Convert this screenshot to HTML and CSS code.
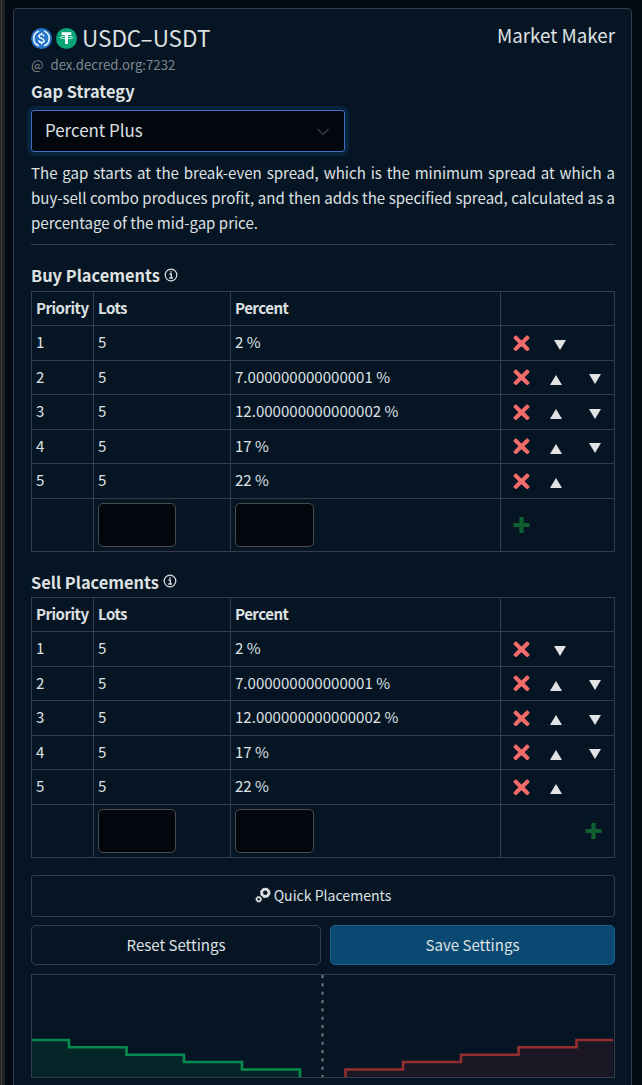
FILE: index.html
```html
<!DOCTYPE html>
<html lang="en">
<head>
<meta charset="utf-8">
<title>Market Maker Settings</title>
<link rel="stylesheet" href="styles.css">
</head>
<body>
<svg class="defs" width="0" height="0">
  <symbol id="cross" viewBox="0 0 17 17"><path d="M2.2 .6H3.4L8.5 5.4L13.6 .6H14.8L16.4 2.2V3.4L11.6 8.3L16.4 13.2V14.4L14.8 16H13.6L8.5 11.2L3.4 16H2.2L.6 14.4V13.2L5.4 8.3L.6 3.4V2.2Z" fill="#f16b6b"/></symbol>
  <symbol id="up" viewBox="0 0 12 10"><path d="M6 0L12 10H0Z" fill="#e1e2e3"/></symbol>
  <symbol id="down" viewBox="0 0 12 10"><path d="M0 0H12L6 10Z" fill="#e1e2e3"/></symbol>
  <symbol id="plus" viewBox="0 0 17 17"><path d="M8.5 0V16M.5 8H16.5" stroke="#0e602f" stroke-width="4.2"/></symbol>
  <symbol id="info" viewBox="0 0 14 14"><circle cx="7" cy="7" r="5.8" fill="none" stroke="#dfe1e2" stroke-width="1.2"/><path d="M5.5 6H7.3V10M5.3 10H9M6.3 3.8H7.8" fill="none" stroke="#dfe1e2" stroke-width="1.3"/></symbol>
</svg>
<main class="card">
  <header class="head">
    <div class="pair">
      <svg class="coin" viewBox="0 0 21 21"><circle cx="10.5" cy="10.5" r="10.5" fill="#2775ca"/><path d="M8 3.2A7.7 7.7 0 0 0 8 17.8M13 3.2A7.7 7.7 0 0 1 13 17.8" fill="none" stroke="#fff" stroke-width="1.4"/><path d="M13 8.3C12.8 6.9 11.8 6.4 10.5 6.4C9 6.4 8 7.1 8 8.3C8 11 13.1 9.9 13.1 12.5C13.1 13.8 12 14.5 10.5 14.5C9 14.5 7.9 13.8 7.8 12.4M10.5 4.8V6.4M10.5 14.5V16.2" fill="none" stroke="#fff" stroke-width="1.4"/></svg>
      <svg class="coin" viewBox="0 0 21 21"><circle cx="10.5" cy="10.5" r="10.5" fill="#08a578"/><path d="M5.7 4.3H15.3V7H11.9V16H9.1V7H5.7Z" fill="#fff"/><ellipse cx="10.5" cy="9.5" rx="6.2" ry="1.3" fill="none" stroke="#fff" stroke-width=".8"/></svg>
      <h1 class="title">USDC–USDT</h1>
    </div>
    <div class="mode">Market Maker</div>
  </header>
  <div class="host"><span>@</span><span>dex.decred.org:7232</span></div>
  <h2 class="label">Gap Strategy</h2>
  <div class="select"><span>Percent Plus</span><svg class="chevron" viewBox="0 0 14 8"><path d="M1.5 1L7 6.5L12.5 1" fill="none" stroke="#393c46" stroke-width="1.5"/></svg></div>
  <p class="about">The gap starts at the break-even spread, which is the minimum spread at which a buy-sell combo produces profit, and then adds the specified spread, calculated as a percentage of the mid-gap price.</p>

  <section class="placements">
    <h2 class="section-title">Buy Placements <svg class="info"><use href="#info"/></svg></h2>
    <table class="grid">
      <colgroup><col class="c-priority"><col class="c-lots"><col class="c-percent"><col class="c-actions"></colgroup>
      <tr><th>Priority</th><th>Lots</th><th>Percent</th><th></th></tr>
      <tr class="tall"><td>1</td><td>5</td><td>2 %</td><td><div class="actions"><svg class="cross"><use href="#cross"/></svg><svg class="tri only-down"><use href="#down"/></svg></div></td></tr>
      <tr><td>2</td><td>5</td><td>7.000000000000001 %</td><td><div class="actions"><svg class="cross"><use href="#cross"/></svg><svg class="tri up"><use href="#up"/></svg><svg class="tri down"><use href="#down"/></svg></div></td></tr>
      <tr class="tall"><td>3</td><td>5</td><td>12.000000000000002 %</td><td><div class="actions"><svg class="cross"><use href="#cross"/></svg><svg class="tri up"><use href="#up"/></svg><svg class="tri down"><use href="#down"/></svg></div></td></tr>
      <tr><td>4</td><td>5</td><td>17 %</td><td><div class="actions"><svg class="cross"><use href="#cross"/></svg><svg class="tri up"><use href="#up"/></svg><svg class="tri down"><use href="#down"/></svg></div></td></tr>
      <tr class="tall"><td>5</td><td>5</td><td>22 %</td><td><div class="actions"><svg class="cross"><use href="#cross"/></svg><svg class="tri up"><use href="#up"/></svg></div></td></tr>
      <tr class="entry"><td></td><td><input class="field" aria-label="Lots"></td><td><input class="field wide" aria-label="Percent"></td><td><div class="actions"><svg class="cross"><use href="#plus"/></svg></div></td></tr>
    </table>
  </section>

  <section class="placements sell">
    <h2 class="section-title">Sell Placements <svg class="info"><use href="#info"/></svg></h2>
    <table class="grid">
      <colgroup><col class="c-priority"><col class="c-lots"><col class="c-percent"><col class="c-actions"></colgroup>
      <tr><th>Priority</th><th>Lots</th><th>Percent</th><th></th></tr>
      <tr class="tall"><td>1</td><td>5</td><td>2 %</td><td><div class="actions"><svg class="cross"><use href="#cross"/></svg><svg class="tri only-down"><use href="#down"/></svg></div></td></tr>
      <tr><td>2</td><td>5</td><td>7.000000000000001 %</td><td><div class="actions"><svg class="cross"><use href="#cross"/></svg><svg class="tri up"><use href="#up"/></svg><svg class="tri down"><use href="#down"/></svg></div></td></tr>
      <tr class="tall"><td>3</td><td>5</td><td>12.000000000000002 %</td><td><div class="actions"><svg class="cross"><use href="#cross"/></svg><svg class="tri up"><use href="#up"/></svg><svg class="tri down"><use href="#down"/></svg></div></td></tr>
      <tr><td>4</td><td>5</td><td>17 %</td><td><div class="actions"><svg class="cross"><use href="#cross"/></svg><svg class="tri up"><use href="#up"/></svg><svg class="tri down"><use href="#down"/></svg></div></td></tr>
      <tr class="tall"><td>5</td><td>5</td><td>22 %</td><td><div class="actions"><svg class="cross"><use href="#cross"/></svg><svg class="tri up"><use href="#up"/></svg></div></td></tr>
      <tr class="entry"><td></td><td><input class="field" aria-label="Lots"></td><td><input class="field wide" aria-label="Percent"></td><td><div class="actions end"><svg class="cross"><use href="#plus"/></svg></div></td></tr>
    </table>
  </section>

  <button class="btn quick"><svg width="16" height="16" viewBox="0 0 16 16" fill="none" stroke="#dfe1e2"><circle cx="10.3" cy="5.8" r="3.6" stroke-width="2.6"/><circle cx="10.3" cy="5.8" r="4.8" stroke-width=".9" stroke-dasharray="2.1 1.67"/><circle cx="3.7" cy="12.3" r="2" stroke-width="1.5"/><circle cx="3.7" cy="12.3" r="2.9" stroke-width=".9" stroke-dasharray="1.3 .98"/></svg>Quick Placements</button>
  <div class="buttons">
    <button class="btn">Reset Settings</button>
    <button class="btn save">Save Settings</button>
  </div>
  <svg class="chart" viewBox="31 974 584 104">
    <path d="M32 1040H69V1047.3H126.5V1054.7H184V1062H242V1069.5H300V1077H32Z" fill="#052628"/>
    <path d="M32 1040H69V1047.3H126.5V1054.7H184V1062H242V1069.5H300V1077" class="buy-line"/>
    <path d="M345.5 1077V1069.5H403V1062H461V1054.7H518.5V1047.3H576.5V1040H613V1077Z" fill="#1b1724"/>
    <path d="M345.5 1077V1069.5H403V1062H461V1054.7H518.5V1047.3H576.5V1040H613" class="sell-line"/>
    <path d="M322.5 975V1077" class="mid"/>
    <rect x="31.5" y="974.5" width="583" height="103" class="frame"/>
  </svg>
</main>
</body>
</html>
```
FILE: styles.css
```css
* { box-sizing: border-box; }
html { height: 100%; overflow: hidden; }
body {
  margin: 0;
  height: 1085px;
  overflow: hidden;
  padding: 8px 10px 0 13px;
  background: linear-gradient(90deg, #20201e 1px, #45443f 1px 2px, #20201e 2px 5px, #030a13 5px);
  color: #dfe1e2;
  font: 15.05px/24px "Noto Sans CJK SC", "Noto Sans", sans-serif;
}
.defs { display: block; height: 0; }
.card {
  height: 1120px;
  padding: 15px 16px 15px 17px;
  border: 1px solid #383c48;
  border-radius: 4px;
  background: #061524;
}
h1, h2, p { margin: 0; }
.head { display: flex; justify-content: space-between; height: 28px; }
.pair { display: flex; align-items: center; gap: 4px; }
.coin { width: 21px; height: 21px; }
.title { margin-left: 1px; padding-bottom: 2px; font-size: 22.5px; font-weight: 400; line-height: 28px; }
.mode { font-size: 18.8px; line-height: 22px; }
.host { display: flex; gap: 7px; height: 26px; font-size: 13.2px; line-height: 25px; color: #82878c; }
.label { height: 32px; font-size: 16.4px; line-height: 26px; }
.select {
  display: flex;
  align-items: center;
  justify-content: space-between;
  width: 314px;
  height: 42px;
  padding: 0 14px 0 13px;
  border: 1px solid #416fc8;
  border-radius: 3px;
  background: #02070e;
  box-shadow: 0 0 0 4px #08233b;
  font-size: 16.9px;
}
.select span { padding-bottom: 2px; }
.chevron { width: 14px; height: 8px; margin-top: 1px; }
.about {
  height: 93px;
  padding-top: 8px;
  border-bottom: 1px solid #383c48;
  line-height: 25px;
  text-align: justify;
}
.placements { padding-top: 17px; }
.section-title { height: 29px; font-size: 16.4px; line-height: 26px; white-space: nowrap; }
.sell .section-title { height: 28px; }
.info { width: 14px; height: 14px; vertical-align: 0; }
.sell .info { vertical-align: 1px; }
.grid { width: 584px; table-layout: fixed; border-collapse: collapse; }
.grid tr { height: 34px; }
.grid .tall { height: 35px; }
.grid .entry { height: 53px; }
.grid th, .grid td { padding: 0 4px; border: 1px solid #383c48; text-align: left; line-height: 24px; white-space: nowrap; }
.grid th { padding-bottom: 2px; font-size: 15px; letter-spacing: -.5px; }
.grid tr:not(.entry) td:not(:last-child) { padding-bottom: 2px; }
.c-priority { width: 62px; }
.c-lots { width: 137px; }
.c-percent { width: 270px; }
.c-actions { width: 114px; }
.actions { display: flex; align-items: center; padding-left: 8px; }
.actions.end { justify-content: flex-end; padding-right: 8px; }
.cross { width: 17px; height: 17px; }
.tri { width: 12px; height: 10px; margin-top: 4px; }
.up { margin-left: 20px; }
.down { margin-left: 27px; margin-top: 3px; }
.only-down { margin-left: 24px; margin-top: 3px; }
.field { display: block; width: 78px; height: 44px; border: 1px solid #4c4c4c; border-radius: 5px; background: #02070e; color: inherit; }
.wide { width: 79px; }
.btn {
  display: flex;
  align-items: center;
  justify-content: center;
  height: 40px;
  padding: 0;
  border: 1px solid #383c48;
  border-radius: 5px;
  background: transparent;
  color: inherit;
  font: inherit;
}
.quick { width: 100%; height: 42px; margin-top: 17px; padding-bottom: 3px; gap: 3px; border-radius: 3px; font-size: 14.1px; }
.buttons { display: grid; grid-template-columns: 290px 285px; gap: 9px; margin: 8px 0 9px; }
.save { border-color: #19608e; background: #0a4972; }
.chart { display: block; width: 584px; height: 104px; }
.frame { fill: none; stroke: #383c48; }
.buy-line { fill: none; stroke: #078a4d; stroke-width: 2.6; }
.sell-line { fill: none; stroke: #962e30; stroke-width: 2.6; }
.mid { stroke: #77797a; stroke-width: 2; stroke-dasharray: 3.2 5.13; }
```
